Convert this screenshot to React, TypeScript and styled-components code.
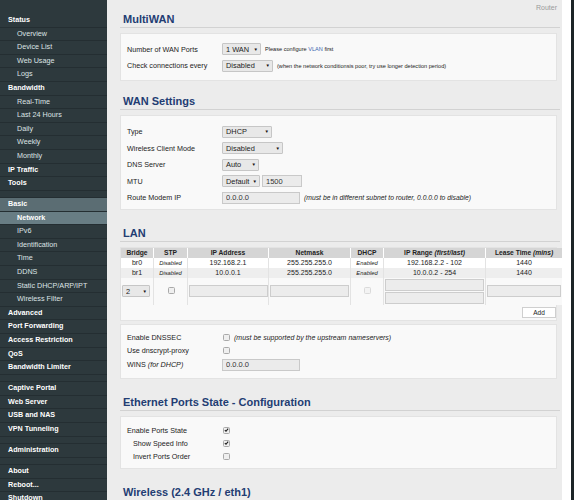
import React from "react";
import styled, { createGlobalStyle } from "styled-components";

const GlobalStyle = createGlobalStyle`
  html, body {
    margin: 0;
    padding: 0;
    background: #fff;
    overflow: hidden;
  }
  body {
    font-family: "Liberation Sans", Arial, sans-serif;
  }
`;

type NavItem = { label: string; sub?: boolean; state?: "group" | "active" } | "gap";

const nav: NavItem[] = [
  { label: "Status" },
  { label: "Overview", sub: true },
  { label: "Device List", sub: true },
  { label: "Web Usage", sub: true },
  { label: "Logs", sub: true },
  { label: "Bandwidth" },
  { label: "Real-Time", sub: true },
  { label: "Last 24 Hours", sub: true },
  { label: "Daily", sub: true },
  { label: "Weekly", sub: true },
  { label: "Monthly", sub: true },
  { label: "IP Traffic" },
  { label: "Tools" },
  "gap",
  { label: "Basic", state: "group" },
  { label: "Network", sub: true, state: "active" },
  { label: "IPv6", sub: true },
  { label: "Identification", sub: true },
  { label: "Time", sub: true },
  { label: "DDNS", sub: true },
  { label: "Static DHCP/ARP/IPT", sub: true },
  { label: "Wireless Filter", sub: true },
  { label: "Advanced" },
  { label: "Port Forwarding" },
  { label: "Access Restriction" },
  { label: "QoS" },
  { label: "Bandwidth Limiter" },
  "gap",
  { label: "Captive Portal" },
  { label: "Web Server" },
  { label: "USB and NAS" },
  { label: "VPN Tunneling" },
  "gap",
  { label: "Administration" },
  "gap",
  { label: "About" },
  { label: "Reboot..." },
  { label: "Shutdown" },
];

const Page = styled.div`
  display: flex;
  height: 500px;
  overflow: hidden;
  background: #fff;
`;

const Sidebar = styled.nav`
  width: 107px;
  flex: none;
  background: #2d393d;
  padding-top: 14px;
  box-sizing: border-box;
`;

const NavRow = styled.div<{ $sub?: boolean; $state?: string }>`
  height: 12.6px;
  line-height: 12.6px;
  border-bottom: 1px solid #242e32;
  padding-left: ${(p) => (p.$sub ? 17 : 8)}px;
  font-size: 7.2px;
  font-weight: ${(p) => (p.$sub && p.$state !== "active" ? 400 : 700)};
  color: ${(p) => (p.$sub && !p.$state ? "#dde4e6" : "#ffffff")};
  background: ${(p) =>
    p.$state === "group" ? "#5b6d73" : p.$state === "active" ? "#687d84" : "transparent"};
  white-space: nowrap;
`;

const NavGap = styled.div`
  height: 6.4px;
  border-bottom: 1px solid #242e32;
`;

const Main = styled.main`
  width: 455px;
  flex: none;
  background: #ececec;
  padding: 0 2px 0 13px;
  box-sizing: border-box;
`;

const Filler = styled.div`
  flex: 1;
  background: #fff;
`;

const Edge = styled.div`
  width: 3px;
  flex: none;
  background: #1d2528;
`;

const TopBar = styled.div`
  height: 12px;
  box-sizing: border-box;
  padding: 4px 3px 0 0;
  line-height: 8px;
  text-align: right;
  font-size: 7px;
  color: #9b9b9b;
`;

const Title = styled.h2<{ $mt: number }>`
  margin: ${(p) => p.$mt}px 0 0 0;
  padding: 0 0 1px 3px;
  font-size: 11px;
  line-height: 14px;
  font-weight: 700;
  color: #233d73;
  border-bottom: 1px solid #d2d2d2;
`;

const Panel = styled.section<{ $mt?: number; $pad: string }>`
  background: #f9f9f9;
  border: 1px solid #e3e3e3;
  margin: ${(p) => p.$mt ?? 5}px 3px 0 0;
  padding: ${(p) => p.$pad};
`;

const Row = styled.div<{ $h: number }>`
  display: flex;
  align-items: center;
  height: ${(p) => p.$h}px;
  white-space: nowrap;
`;

const Label = styled.div<{ $indent?: boolean }>`
  flex: none;
  width: ${(p) => (p.$indent ? 89 : 95)}px;
  padding-left: ${(p) => (p.$indent ? 6 : 0)}px;
  font-size: 7.2px;
  color: #222;

  em {
    font-style: italic;
  }
`;

const Select = styled.div<{ $w: number }>`
  display: inline-flex;
  align-items: center;
  justify-content: space-between;
  gap: 3px;
  flex: none;
  width: ${(p) => p.$w}px;
  height: 12px;
  box-sizing: border-box;
  padding: 0 2px 0 3px;
  background: #e8e8e8;
  border: 1px solid #c6c6c6;
  border-radius: 1px;
  font-size: 7.4px;
  color: #222;
`;

const Caret = styled.span`
  font-size: 4.5px;
  color: #111;
`;

const TextInput = styled.input<{ $w: number; $gap?: number }>`
  flex: none;
  width: ${(p) => p.$w}px;
  height: 12px;
  box-sizing: border-box;
  margin: 0 0 0 ${(p) => p.$gap ?? 0}px;
  padding: 0 3px;
  border: 1px solid #c9c9c9;
  background: #ebebeb;
  font-family: "Liberation Sans", Arial, sans-serif;
  font-size: 7.5px;
  color: #333;
  outline: none;
`;

const Note = styled.span<{ $size: number; $italic?: boolean }>`
  margin-left: 4px;
  font-size: ${(p) => p.$size}px;
  font-style: ${(p) => (p.$italic ? "italic" : "normal")};
  color: #222;
`;

const Link = styled.span`
  color: #3a66b0;
`;

const Box = styled.span<{ $faded?: boolean }>`
  display: inline-flex;
  align-items: center;
  justify-content: center;
  flex: none;
  width: 7px;
  height: 7px;
  margin-left: 1px;
  box-sizing: border-box;
  border: 1px solid ${(p) => (p.$faded ? "#dadada" : "#a9a9a9")};
  border-radius: 1.5px;
  background: ${(p) => (p.$faded ? "#f3f3f3" : "#efefef")};
`;

const Checkbox = ({ checked, faded }: { checked?: boolean; faded?: boolean }) => (
  <Box $faded={faded}>
    {checked && (
      <svg width="6" height="6" viewBox="0 0 6 6">
        <path d="M1 3.1 L2.4 4.5 L5 1.3" stroke="#1a1a1a" strokeWidth="1.3" fill="none" />
      </svg>
    )}
  </Box>
);

const LanTable = styled.table`
  width: 435px;
  border-collapse: collapse;
  table-layout: fixed;
`;

const Th = styled.th<{ $w: number }>`
  width: ${(p) => p.$w}px;
  height: 10px;
  padding: 0;
  background: #d5d5d5;
  border-left: 1px solid #fff;
  font-size: 6.7px;
  font-weight: 700;
  color: #222;
  text-align: center;
  white-space: nowrap;

  &:first-child {
    border-left: 0;
  }

  em {
    font-style: italic;
  }
`;

const Tr = styled.tr<{ $bg: string }>`
  background: ${(p) => p.$bg};
`;

const Td = styled.td<{ $h?: number }>`
  height: ${(p) => p.$h ?? 10}px;
  padding: 0;
  border-left: 1px solid #e3e3e3;
  text-align: center;
  vertical-align: middle;
  font-size: 7px;
  color: #222;
  white-space: nowrap;

  &:first-child {
    border-left: 0;
  }
`;

const State = styled.span`
  font-size: 5.8px;
  font-style: italic;
`;

const CellInput = styled.input<{ $w: number }>`
  display: block;
  width: ${(p) => p.$w}px;
  height: 12px;
  box-sizing: border-box;
  margin: 0 auto;
  padding: 0;
  border: 1px solid #cdcdcd;
  background: #ececec;
  outline: none;
`;

const Stack = styled.div`
  display: flex;
  flex-direction: column;
  align-items: center;
  gap: 1px;
`;

const BridgeCell = styled.div`
  display: flex;
  padding-left: 1px;
`;

const Actions = styled.div`
  display: flex;
  justify-content: flex-end;
  padding: 2px 0 2px;
`;

const AddButton = styled.button`
  width: 34px;
  height: 11px;
  padding: 0;
  border: 1px solid #cfcfcf;
  background: #fff;
  font-family: "Liberation Sans", Arial, sans-serif;
  font-size: 6.5px;
  color: #222;
`;

const lanRows = [
  { bridge: "br0", stp: "Disabled", ip: "192.168.2.1", mask: "255.255.255.0", dhcp: "Enabled", range: "192.168.2.2 - 102", lease: "1440" },
  { bridge: "br1", stp: "Disabled", ip: "10.0.0.1", mask: "255.255.255.0", dhcp: "Enabled", range: "10.0.0.2 - 254", lease: "1440" },
];

export default function App() {
  return (
    <>
      <GlobalStyle />
      <Page>
        <Sidebar>
          {nav.map((item, i) =>
            item === "gap" ? (
              <NavGap key={i} />
            ) : (
              <NavRow key={i} $sub={item.sub} $state={item.state}>
                {item.label}
              </NavRow>
            )
          )}
        </Sidebar>

        <Main>
          <TopBar>Router</TopBar>

          <Title $mt={0}>MultiWAN</Title>
          <Panel $pad="7px 6px 6px">
            <Row $h={16.4}>
              <Label>Number of WAN Ports</Label>
              <Select $w={39}>
                1 WAN <Caret>▼</Caret>
              </Select>
              <Note $size={5.6}>
                Please configure <Link>VLAN</Link> first
              </Note>
            </Row>
            <Row $h={16.4}>
              <Label>Check connections every</Label>
              <Select $w={51}>
                Disabled <Caret>▼</Caret>
              </Select>
              <Note $size={5.6}>
                (when the network conditionsis poor, try use longer detection period)
              </Note>
            </Row>
          </Panel>

          <Title $mt={13}>WAN Settings</Title>
          <Panel $pad="8px 6px 3px">
            <Row $h={16.4}>
              <Label>Type</Label>
              <Select $w={50}>
                DHCP <Caret>▼</Caret>
              </Select>
            </Row>
            <Row $h={16.4}>
              <Label>Wireless Client Mode</Label>
              <Select $w={61}>
                Disabled <Caret>▼</Caret>
              </Select>
            </Row>
            <Row $h={16.4}>
              <Label>DNS Server</Label>
              <Select $w={37}>
                Auto <Caret>▼</Caret>
              </Select>
            </Row>
            <Row $h={16.4}>
              <Label>MTU</Label>
              <Select $w={38}>
                Default <Caret>▼</Caret>
              </Select>
              <TextInput $w={40} $gap={2} readOnly value="1500" />
            </Row>
            <Row $h={16.4}>
              <Label>Route Modem IP</Label>
              <TextInput $w={78} readOnly value="0.0.0.0" />
              <Note $size={6.8} $italic>
                (must be in different subnet to router, 0.0.0.0 to disable)
              </Note>
            </Row>
          </Panel>

          <Title $mt={16}>LAN</Title>
          <Panel $pad="0">
            <LanTable>
              <thead>
                <tr>
                  <Th $w={32}>Bridge</Th>
                  <Th $w={33}>STP</Th>
                  <Th $w={80}>IP Address</Th>
                  <Th $w={81}>Netmask</Th>
                  <Th $w={32}>DHCP</Th>
                  <Th $w={101}>
                    IP Range <em>(first/last)</em>
                  </Th>
                  <Th $w={76}>
                    Lease Time <em>(mins)</em>
                  </Th>
                </tr>
              </thead>
              <tbody>
                {lanRows.map((r, i) => (
                  <Tr key={r.bridge} $bg={i === 0 ? "#ffffff" : "#eeeeee"}>
                    <Td>{r.bridge}</Td>
                    <Td>
                      <State>{r.stp}</State>
                    </Td>
                    <Td>{r.ip}</Td>
                    <Td>{r.mask}</Td>
                    <Td>
                      <State>{r.dhcp}</State>
                    </Td>
                    <Td>{r.range}</Td>
                    <Td>{r.lease}</Td>
                  </Tr>
                ))}
                <Tr $bg="#f9f9f9">
                  <Td $h={27}>
                    <BridgeCell>
                      <Select $w={28}>
                        2 <Caret>▼</Caret>
                      </Select>
                    </BridgeCell>
                  </Td>
                  <Td>
                    <Checkbox />
                  </Td>
                  <Td>
                    <CellInput $w={79} readOnly />
                  </Td>
                  <Td>
                    <CellInput $w={79} readOnly />
                  </Td>
                  <Td>
                    <Checkbox faded />
                  </Td>
                  <Td>
                    <Stack>
                      <CellInput $w={99} readOnly />
                      <CellInput $w={99} readOnly />
                    </Stack>
                  </Td>
                  <Td>
                    <CellInput $w={74} readOnly />
                  </Td>
                </Tr>
              </tbody>
            </LanTable>
            <Actions>
              <AddButton>Add</AddButton>
            </Actions>
          </Panel>

          <Panel $mt={3} $pad="6px 6px 6px">
            <Row $h={13.3}>
              <Label>Enable DNSSEC</Label>
              <Checkbox />
              <Note $size={7} $italic>
                (must be supported by the upstream nameservers)
              </Note>
            </Row>
            <Row $h={13.3}>
              <Label>Use dnscrypt-proxy</Label>
              <Checkbox />
            </Row>
            <Row $h={14.4}>
              <Label>
                WINS <em>(for DHCP)</em>
              </Label>
              <TextInput $w={78} readOnly value="0.0.0.0" />
            </Row>
          </Panel>

          <Title $mt={16}>Ethernet Ports State - Configuration</Title>
          <Panel $pad="7px 6px 5px">
            <Row $h={13}>
              <Label>Enable Ports State</Label>
              <Checkbox checked />
            </Row>
            <Row $h={13}>
              <Label $indent>Show Speed Info</Label>
              <Checkbox checked />
            </Row>
            <Row $h={13}>
              <Label $indent>Invert Ports Order</Label>
              <Checkbox />
            </Row>
          </Panel>

          <Title $mt={16}>Wireless (2.4 GHz / eth1)</Title>
        </Main>

        <Filler />
        <Edge />
      </Page>
    </>
  );
}
